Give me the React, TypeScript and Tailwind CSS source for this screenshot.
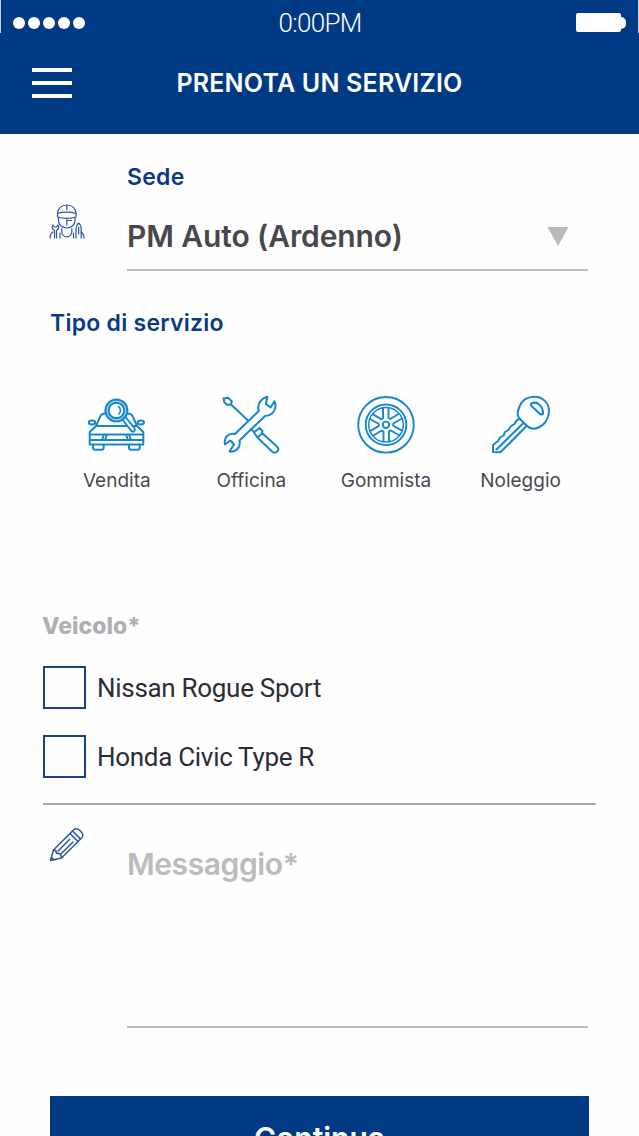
import { useState } from "react";
import type { ReactNode } from "react";

interface ServiceProps {
  label: string;
  children: ReactNode;
}

interface VehicleProps {
  name: string;
}

const MechanicIcon = () => (
  <svg
    viewBox="0 0 36 36"
    className="h-9 w-9"
    fill="none"
    stroke="#2b569c"
    strokeWidth="1.2"
    strokeLinecap="round"
    strokeLinejoin="round"
  >
    <path d="M8.500 9.500C8.500 4.500 12.500 1 17.800 1S27 4.500 27 9.500" />
    <path d="M17.800 1v4.500" />
    <path d="M8.500 9.500c5-1.800 13.500-1.800 18.500 0V13c-5 1.800-13.500 1.800-18.500 0z" />
    <path d="M9.500 14v2.500c0 4 3.500 7.500 8.300 7.500s8.200-3.500 8.200-7.500V14" />
    <path d="M17.800 15.500V21M17.800 16.500h4.500" />
    <path d="M12.800 24.500v3.300c0 3 2.300 5 5 5s5-2 5-5v-3.300" />
    <path d="M4 21c-1.800 2.500-.5 4.500 1.500 5.500V34M9 21c1.800 2.500.5 4.500-1.500 5.500V34M4 21l1.500 2h2L9 21" />
    <path d="M4 28c-2 1-2.800 3.500-3 6M11 29v5M24.500 29v5M32 28c2 1 2.800 3.500 3 6" />
    <path d="M27 34v-9c.5-3 1.300-5 2.700-6 1.400 1 2.300 3 2.500 6v9M29.700 23v7" />
  </svg>
);

const CarIcon = () => (
  <svg
    viewBox="0 0 60 60"
    className="h-15 w-15"
    fill="none"
    stroke="#1687cd"
    strokeWidth="2"
    strokeLinecap="round"
    strokeLinejoin="round"
  >
    <path d="M18 18.500c-2.500 0-4 1-5 3.500l-4 9-6.300 6v12.500h53.600V37L50 31l-4-9c-1-2.500-2.500-3.500-5-3.500" />
    <path d="M9 31h41M3 39.500h53M3 45h53M17 39.500 15 45M20 39.500 18 45M42 39.500l2 5.500M39 39.500l2 5.500" />
    <path d="M6 50v2.500c0 1.500.8 2.300 2.200 2.300h6.300c1.400 0 2.200-.8 2.200-2.300V50M42 50v2.500c0 1.500.8 2.300 2.200 2.300h6.300c1.400 0 2.200-.8 2.200-2.300V50" />
    <ellipse cx="5" cy="27.500" rx="3.200" ry="1.900" />
    <ellipse cx="53.800" cy="27.500" rx="3.200" ry="1.900" />
    <path d="m35 24 9.500 12c1.700 1.700 4.300-.3 3.200-2.500L38.500 22z" fill="white" />
    <circle cx="29.400" cy="15.500" r="11" fill="#a5d4ef" />
    <circle cx="29.400" cy="15.500" r="7.800" fill="white" />
    <path d="M31.500 11.500c2.200 2 2.500 5 .5 7.500" strokeWidth="1.600" />
  </svg>
);

const ToolsIcon = () => (
  <svg
    viewBox="0 0 60 60"
    className="h-15 w-15"
    fill="none"
    stroke="#1687cd"
    strokeWidth="2"
    strokeLinecap="round"
    strokeLinejoin="round"
  >
    <path d="m2.500 3.500 4.500-.8 3.800 3.500-.8 3-3.500.8-3-2.500z" />
    <path d="m10 9.500 17 16" />
    <path
      d="M37.800 16c-2-6.500 2-12.500 8.500-14.300L45 9l4.500 3.500 4-6.300c3 7.500-1.500 14.500-9.500 14.800L18.500 45.500c1.500 7-3.500 12-10 11l4.500-7-3.500-4-5.500 4c-1.500-7 3.500-12 10-10.500z"
      fill="white"
    />
    <path d="m33 37.500 5.500-4.500 3 3-.5 2.500-4.500 4zM41 38 56 51.500c3.500 4-1.500 8-5 5L36.500 42.500M30 34l3 3" />
  </svg>
);

const WheelIcon = () => (
  <svg
    viewBox="0 0 60 60"
    className="h-15 w-15"
    fill="none"
    stroke="#1687cd"
    strokeWidth="1.9"
    strokeLinejoin="round"
  >
    <circle cx="30" cy="29.800" r="27.800" />
    <circle cx="30" cy="29.800" r="20.300" />
    <circle cx="30" cy="29.800" r="17.300" strokeWidth="1.500" />
    <circle cx="30" cy="29.800" r="3.200" />
    {[0, 60, 120, 180, 240, 300].map((angle) => (
      <path
        key={angle}
        transform={`rotate(${angle} 30 29.8)`}
        d="M32.500 12.800v9.500c0 1.500 2 2 3 1l7.500-4.500"
      />
    ))}
  </svg>
);

const KeyIcon = () => (
  <svg
    viewBox="0 0 60 60"
    className="h-15 w-15"
    fill="none"
    stroke="#1687cd"
    strokeWidth="2"
    strokeLinecap="round"
    strokeLinejoin="round"
  >
    <path d="M28.500 11.500C31 5 37 1.700 43.600 1.700c8 0 14.400 6.300 14.400 14.300 0 7-4 14-11 16.800-4 1.600-8.500.7-11.500-2.300l-7-7c-3-3-1.500-8.500 0-12z" />
    <path d="M40.500 8.500c5.500-3 12 3 11.500 10.500-1.500.7-2.500.5-3.500-.5l-8-7.500c-1-1-1-2 0-2.500z" />
    <path d="m28.500 24-3 1.500-2 3.500-3.500 2-2.500 4-3.500 2-1.500 3.500-3.500 2-2 3.500-5 4v7l7.500.3L35.500 31M5.500 54.500 32 28.500" />
  </svg>
);

const PencilIcon = () => (
  <svg
    viewBox="0 0 36 36"
    className="h-9 w-9"
    fill="none"
    stroke="#2b569c"
    strokeWidth="1.5"
    strokeLinecap="round"
    strokeLinejoin="round"
  >
    <path d="M1.500 33.500 4.500 23 25 2.500c3-3.300 11.500 4.500 8 8L12.500 31z" />
    <path d="M4.500 23c2 0 3 1 3 3.300 3-.3 4.800 1.200 5 4.700M2.500 30.500l2.500 2.300M21 6.500l8 8M23.500 4l8 8M9 24l11.500-11.500M12 27l12-12" />
  </svg>
);

const Service = ({ label, children }: ServiceProps) => {
  return (
    <button className="flex w-[134.6px] flex-col items-center">
      {children}
      <span className="mt-4 text-[19px] leading-5 text-[#4a494f]">
        {label}
      </span>
    </button>
  );
};

const Vehicle = ({ name }: VehicleProps) => {
  const [checked, setChecked] = useState(false);

  return (
    <button
      role="checkbox"
      aria-checked={checked}
      onClick={() => setChecked(!checked)}
      className="flex h-[43px] items-center gap-[11px]"
    >
      <span className="flex h-[43px] w-[43px] items-center justify-center border-2 border-[#174488]">
        {checked && <span className="h-6 w-6 bg-[#003984]" />}
      </span>
      <span className="font-['Roboto',sans-serif] text-[26px] leading-none tracking-[-0.3px] text-[#2b2d36]">
        {name}
      </span>
    </button>
  );
};

const App = () => {
  return (
    <div className="flex h-[1136px] w-[639px] flex-col overflow-hidden bg-[#fefefe] font-['Inter',sans-serif]">
      <header className="h-[134px] shrink-0 bg-[#003984] text-white">
        <div className="flex h-[33px] items-center border-x border-[#c5d3e8] pt-3">
          <div className="flex w-[200px] gap-[3px] pl-3">
            {[0, 1, 2, 3, 4].map((dot) => (
              <span key={dot} className="h-3 w-3 rounded-full bg-white" />
            ))}
          </div>
          <div className="flex-1 pl-px text-center font-['Roboto',sans-serif] text-[26px] leading-5 font-light tracking-[-0.7px]">
            0:00PM
          </div>
          <div className="flex w-[200px] items-center justify-end pr-3">
            <span className="h-[19px] w-[45px] rounded-xs bg-white" />
            <span className="h-3 w-[5px] rounded-r-full bg-white" />
          </div>
        </div>
        <div className="flex h-[100px] items-center px-8">
          <button className="flex w-10 flex-col gap-[9px]">
            <span className="h-1 bg-white" />
            <span className="h-1 bg-white" />
            <span className="h-1 bg-white" />
          </button>
          <h1 className="flex-1 pt-px pr-10 text-center text-[25px] leading-none font-semibold tracking-[0.2px]">
            PRENOTA UN SERVIZIO
          </h1>
        </div>
      </header>

      <section className="flex pt-[31px] pl-[49px]">
        <div className="w-[78px] pt-[39px]">
          <MechanicIcon />
        </div>
        <div className="w-[461px]">
          <div className="text-[23px] leading-6 font-semibold tracking-[0.25px] text-[#0a3a86]">
            Sede
          </div>
          <button className="mt-[31px] flex w-full items-center justify-between border-b-2 border-[#bdbcc0] pr-[19px] pb-[17px] text-[#48474c]">
            <span className="text-[30px] leading-8 font-semibold tracking-[-0.1px]">
              PM Auto (Ardenno)
            </span>
            <svg viewBox="0 0 22 20" className="h-5 w-[22px]">
              <path d="M.5 1h21L11 20z" fill="#b9b8bb" />
            </svg>
          </button>
        </div>
      </section>

      <h2 className="mt-[40px] pl-[50px] text-[23px] leading-6 font-semibold tracking-[0.25px] text-[#0a3a86]">
        Tipo di servizio
      </h2>
      <div className="mt-[60px] flex pl-[49.5px]">
        <Service label="Vendita">
          <CarIcon />
        </Service>
        <Service label="Officina">
          <ToolsIcon />
        </Service>
        <Service label="Gommista">
          <WheelIcon />
        </Service>
        <Service label="Noleggio">
          <KeyIcon />
        </Service>
      </div>

      <section className="mt-[123px] ml-[43px] w-[553px] border-b-2 border-[#aaa9ad] pb-[25px]">
        <h2 className="-ml-px text-[23px] leading-6 font-extrabold text-[#b0afb3]">
          Veicolo*
        </h2>
        <div className="mt-7 flex flex-col gap-[26px]">
          <Vehicle name="Nissan Rogue Sport" />
          <Vehicle name="Honda Civic Type R" />
        </div>
      </section>

      <section className="flex pt-[22px] pl-[49px]">
        <div className="w-[78px]">
          <PencilIcon />
        </div>
        <textarea
          placeholder="Messaggio*"
          className="h-[201px] w-[461px] resize-none border-b-2 border-[#bdbcc0] pt-[21px] text-[30px] leading-8 font-semibold tracking-[-0.4px] outline-none placeholder:text-[#bbbabd]"
        />
      </section>

      <button className="mt-[68px] ml-[50px] h-[84px] w-[539px] shrink-0 bg-[#003984] text-[30px] leading-none font-semibold text-white">
        Continua
      </button>
    </div>
  );
};

export default App;
